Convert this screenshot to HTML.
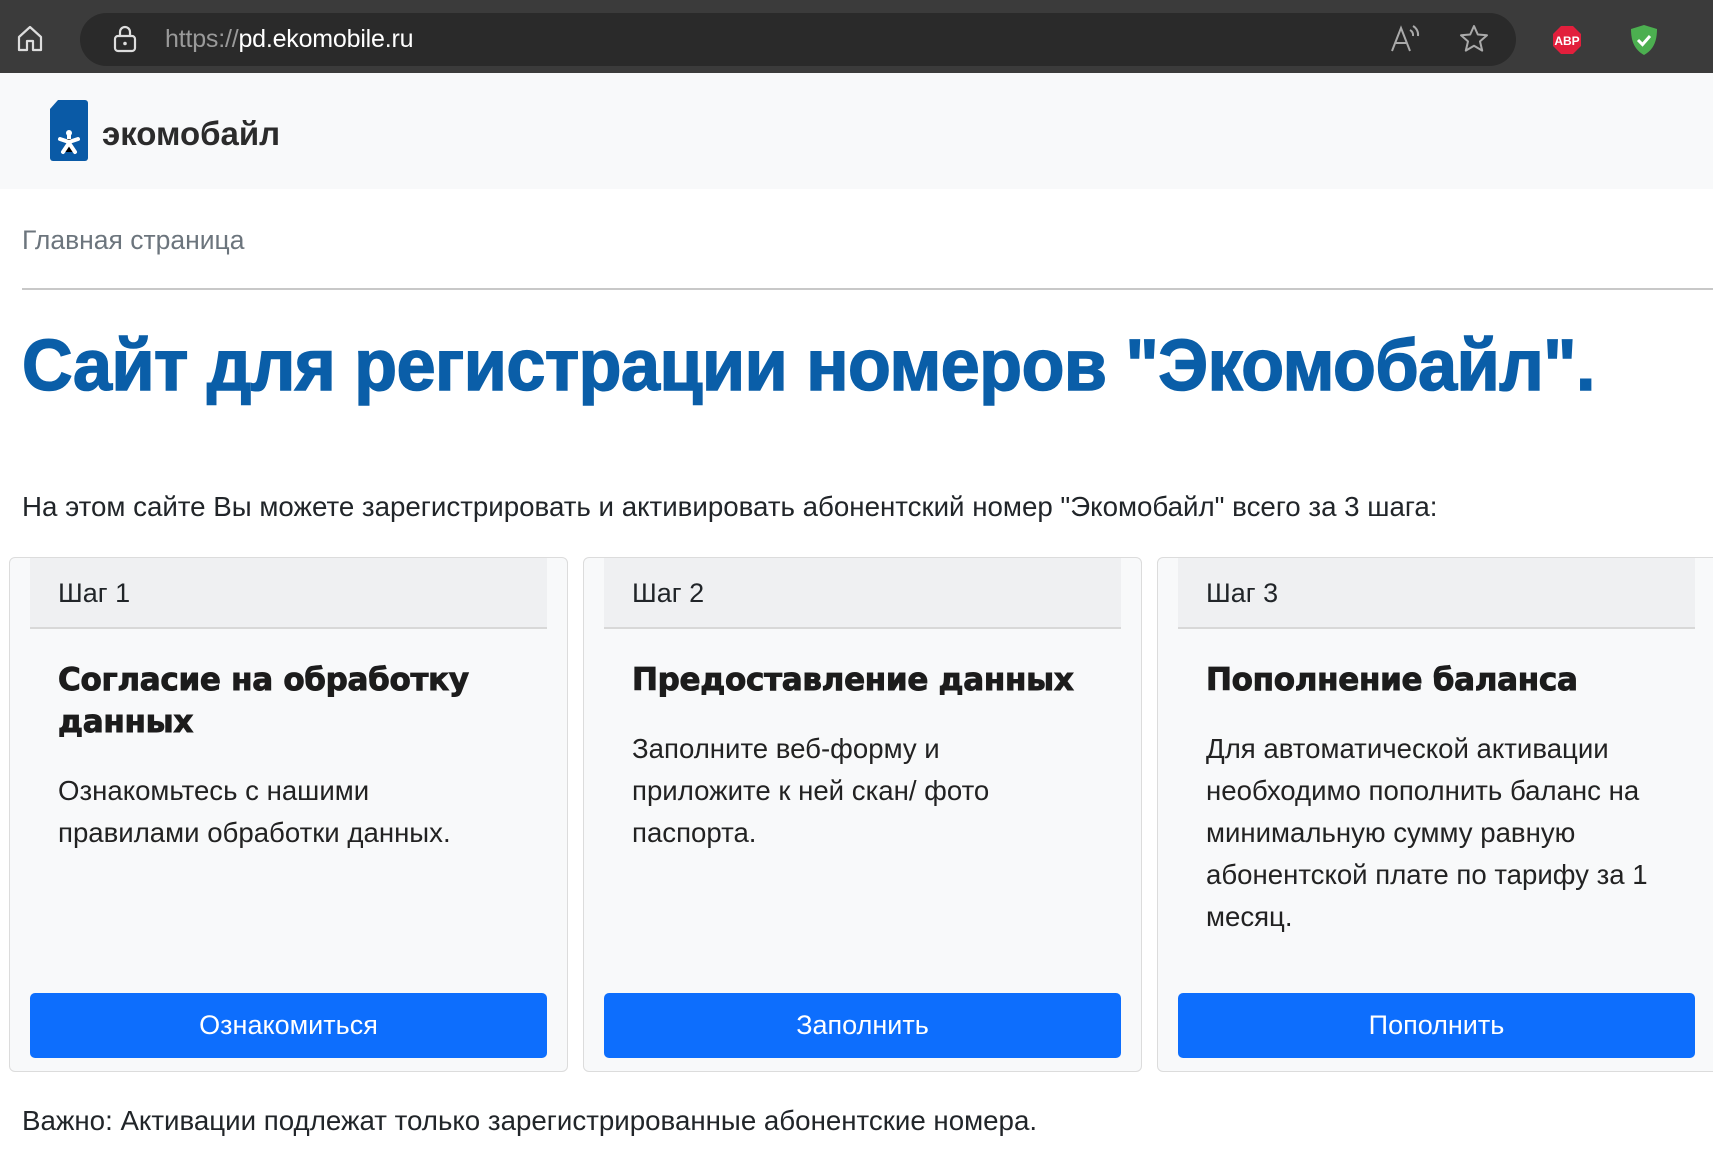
<!DOCTYPE html>
<html><head><meta charset="utf-8"><style>
*{box-sizing:border-box;margin:0;padding:0}
body{width:1713px;height:1149px;overflow:hidden;background:#fff;font-family:"Liberation Sans","DejaVu Sans",sans-serif;color:#212529;position:relative}
.top{position:absolute;left:0;top:0;width:1713px;height:73px;background:#3b3b3b}
.pill{position:absolute;left:80px;top:13px;width:1436px;height:53px;border-radius:27px;background:#2a2a2a}
.url{position:absolute;left:165px;top:25px;font-size:25px;color:#fff;letter-spacing:-0.2px}
.url span{color:#9a9a9a}
.hdr{position:absolute;left:0;top:73px;width:1713px;height:116px;background:#f8f9fa}
.abs{position:absolute}
.crumb{left:22px;top:225px;font-size:26.5px;color:#6c757d}
.hr{left:22px;top:288px;width:1691px;height:2px;background:#c8c8c8}
h1{position:absolute;left:22px;top:325px;font-size:72px;font-weight:bold;color:#0a5ea8;white-space:nowrap;transform-origin:left top;letter-spacing:-0.5px;-webkit-text-stroke:1.5px #0a5ea8}
.lead{left:22px;top:491px;font-size:27.7px;white-space:nowrap}
.card{position:absolute;top:557px;height:515px;background:#f8f9fa;border:1px solid #dcdcdc;border-radius:6px}
.ch{position:absolute;left:20px;top:0;height:71px;background:#eff0f2;border-bottom:2px solid #d8d8d8}
.ch div{position:absolute;left:28px;top:20px;font-size:27px;color:#212529}
.ct{position:absolute;left:48px;top:101px;font-family:"DejaVu Sans",sans-serif;font-weight:bold;font-size:31px;line-height:42px;color:#1c1c1c;letter-spacing:-0.3px;-webkit-text-stroke:0.9px #1c1c1c}
.cb{position:absolute;left:48px;font-size:27.6px;line-height:42px;color:#222}
.btn{position:absolute;left:20px;top:435px;height:65px;background:#0d6efd;border-radius:5px;color:#fff;font-size:27px;text-align:center;line-height:65px}
.bottom{left:22px;top:1105px;font-size:27.7px;white-space:nowrap}
</style></head><body>
<div class="top">
<svg class="abs" style="left:15px;top:24px" width="30" height="30" viewBox="0 0 30 30"><path d="M4 13 L15 3 L26 13 V26 H18 V17 H12 V26 H4 Z" fill="none" stroke="#ddd" stroke-width="2.2" stroke-linejoin="round"/></svg>
<div class="pill"></div>
<svg class="abs" style="left:112px;top:24px" width="26" height="30" viewBox="0 0 26 30"><rect x="3" y="12" width="20" height="15" rx="3" fill="none" stroke="#ddd" stroke-width="2.2"/><path d="M8 12 V8 a5 5 0 0 1 10 0 V12" fill="none" stroke="#ddd" stroke-width="2.2"/><circle cx="13" cy="19.5" r="1.8" fill="#ddd"/></svg>
<div class="url"><span>https://</span>pd.ekomobile.ru</div>
<svg class="abs" style="left:1390px;top:24px" width="32" height="30" viewBox="0 0 32 30"><path d="M2 27 L11 4 L20 27 M6 19 H16" fill="none" stroke="#aaa" stroke-width="2"/><path d="M20 6 a6 6 0 0 1 3 6 M23 2 a10 10 0 0 1 5 10" fill="none" stroke="#aaa" stroke-width="2"/></svg>
<svg class="abs" style="left:1458px;top:23px" width="32" height="32" viewBox="0 0 32 32"><path d="M16 3 L19.8 11.5 L29 12.3 L22 18.4 L24.2 27.6 L16 22.8 L7.8 27.6 L10 18.4 L3 12.3 L12.2 11.5 Z" fill="none" stroke="#aaa" stroke-width="2" stroke-linejoin="round"/></svg>
<svg class="abs" style="left:1552px;top:25px" width="30" height="30" viewBox="0 0 30 30"><path d="M9 1 H21 L29 9 V21 L21 29 H9 L1 21 V9 Z" fill="#e21f3c"/><text x="15" y="20" font-size="12" font-weight="bold" fill="#fff" text-anchor="middle" font-family="Liberation Sans">ABP</text></svg>
<svg class="abs" style="left:1630px;top:24px" width="28" height="32" viewBox="0 0 28 32"><path d="M14 1 L27 5 C27 18 23 26 14 31 C5 26 1 18 1 5 Z" fill="#4caf50"/><path d="M8 16 L12.5 20.5 L20 12" fill="none" stroke="#fff" stroke-width="3"/></svg>
</div>
<div class="hdr">
<svg class="abs" style="left:49px;top:27px" width="40" height="62" viewBox="0 0 40 62"><path d="M9 0 H36 a3 3 0 0 1 3 3 V58 a3 3 0 0 1 -3 3 H4 a3 3 0 0 1 -3 -3 V9 Z" fill="#0a5aa6"/><g stroke="#fff" stroke-width="4" stroke-linecap="round"><path d="M20 34 V49"/><path d="M11 39 L20 42 L29 39"/><path d="M14 52 L20 43 L26 52"/></g><circle cx="20" cy="33" r="3" fill="#fff"/></svg>
<div class="abs" style="left:102px;top:42px;font-size:33px;font-weight:bold;color:#2b2b2b;letter-spacing:0px">экомобайл</div>
</div>
<div class="abs crumb">Главная страница</div>
<div class="abs hr"></div>
<h1 id="h">Сайт для регистрации номеров "Экомобайл".</h1>
<div class="abs lead">На этом сайте Вы можете зарегистрировать и активировать абонентский номер "Экомобайл" всего за 3 шага:</div>

<div class="card" style="left:9px;width:559px">
<div class="ch" style="width:517px"><div>Шаг 1</div></div>
<div class="ct">Согласие на обработку<br>данных</div>
<div class="cb" style="top:212px">Ознакомьтесь с нашими<br>правилами обработки данных.</div>
<div class="btn" style="width:517px">Ознакомиться</div>
</div>
<div class="card" style="left:583px;width:559px">
<div class="ch" style="width:517px"><div>Шаг 2</div></div>
<div class="ct">Предоставление данных</div>
<div class="cb" style="top:170px">Заполните веб-форму и<br>приложите к ней скан/ фото<br>паспорта.</div>
<div class="btn" style="width:517px">Заполнить</div>
</div>
<div class="card" style="left:1157px;width:570px">
<div class="ch" style="width:517px"><div>Шаг 3</div></div>
<div class="ct">Пополнение баланса</div>
<div class="cb" style="top:170px">Для автоматической активации<br>необходимо пополнить баланс на<br>минимальную сумму равную<br>абонентской плате по тарифу за 1<br>месяц.</div>
<div class="btn" style="width:517px">Пополнить</div>
</div>
<div class="abs bottom">Важно: Активации подлежат только зарегистрированные абонентские номера.</div>
<script>
var h=document.getElementById('h');var w=h.getBoundingClientRect().width;h.style.transform='scaleX('+(1573/w)+')';
</script>
</body></html>
